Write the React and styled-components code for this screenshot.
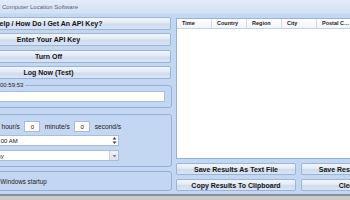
import React from "react";
import styled, { createGlobalStyle } from "styled-components";

const GlobalStyle = createGlobalStyle`
  html, body {
    margin: 0;
    padding: 0;
    overflow: hidden;
    background: #c9c9c9;
  }
  body {
    font-family: "Liberation Sans", Arial, sans-serif;
  }
`;

const Screen = styled.div`
  width: 350px;
  height: 200px;
  overflow: hidden;
  background: #cbcbcb;
`;

const Window = styled.div`
  width: 501px;
  height: 194px;
  margin-left: -76px;
  display: flex;
  flex-direction: column;
  background: #c4d7f2;
  border-bottom: 2px solid #8d9096;
`;

const TitleBar = styled.div`
  height: 14px;
  flex: none;
  box-sizing: border-box;
  display: flex;
  align-items: center;
  padding-left: 78px;
  font-size: 6px;
  color: #59637a;
  background: linear-gradient(#e3ecf8, #d3e1f4);
  border-bottom: 1px solid #ccdcf2;
`;

const Body = styled.div`
  flex: 1;
  display: flex;
  gap: 4px;
  padding: 3px 0 0 2px;
`;

const LeftPanel = styled.div`
  width: 246px;
  display: flex;
  flex-direction: column;
`;

const RightPanel = styled.div`
  width: 245px;
  display: flex;
  flex-direction: column;
`;

const ButtonStack = styled.div`
  display: flex;
  flex-direction: column;
  gap: 3.4px;
`;

const PushButton = styled.button`
  display: block;
  width: ${(p) => p.$w || "100%"};
  height: ${(p) => p.$h || 13}px;
  padding: 0;
  box-sizing: border-box;
  border: 1px solid #9db3d3;
  border-radius: 2px;
  background: linear-gradient(#f2f6fc, #e2eaf7 45%, #cfdcf0 55%, #d9e5f5);
  font: bold 7px "Liberation Sans", Arial, sans-serif;
  color: #141414;
  white-space: nowrap;
  overflow: hidden;
`;

const Group = styled.fieldset`
  margin: ${(p) => p.$mt || 0}px 0 0;
  padding: ${(p) => p.$pad};
  min-width: 0;
  box-sizing: border-box;
  border: 1px solid #95b1da;
  border-radius: 3px;
`;

const Caption = styled.legend`
  margin-left: 65px;
  padding: 0 2px;
  font-size: 6px;
  line-height: 8px;
  color: #1c1c1c;
`;

const TextField = styled.input`
  display: block;
  width: 100%;
  height: 11px;
  box-sizing: border-box;
  margin: 0;
  padding: 0 2px;
  border: 1px solid #a7bddb;
  background: #fff;
  font: 6px "Liberation Sans", Arial, sans-serif;
`;

const Row = styled.div`
  display: flex;
  align-items: center;
  gap: 3.5px;
  height: 11px;
  font-size: 6.6px;
  color: #1a1a1a;
`;

const Lead = styled.div`
  width: 65px;
  display: flex;
  justify-content: flex-end;
  align-items: center;
  gap: 3px;
`;

const NumBox = styled.input`
  width: 16px;
  height: 11px;
  box-sizing: border-box;
  margin: 0 1px;
  padding: 0;
  border: 1px solid #a7bddb;
  background: #fff;
  text-align: center;
  font: 6px "Liberation Sans", Arial, sans-serif;
  color: #111;
`;

const Picker = styled.div`
  width: 186px;
  height: 11px;
  margin-top: ${(p) => p.$mt}px;
  box-sizing: border-box;
  display: flex;
  align-items: center;
  border: 1px solid #a7bddb;
  background: #fff;
  font-size: 6px;
  color: #111;
`;

const PickerText = styled.span`
  flex: 1;
  padding-left: ${(p) => p.$pad}px;
  white-space: nowrap;
`;

const Spin = styled.div`
  width: 8px;
  height: 100%;
  display: flex;
  align-items: center;
  justify-content: center;
`;

const DropButton = styled.div`
  width: 8px;
  height: 100%;
  display: flex;
  align-items: center;
  justify-content: center;
  background: linear-gradient(#f1f3f6, #dde3ea);
  border-left: 1px solid #c8d3e2;
`;

const CheckRow = styled.label`
  display: flex;
  align-items: center;
  gap: 4px;
  height: 10px;
  margin-left: 34px;
  font-size: 6.3px;
  color: #1a1a1a;
`;

const CheckBox = styled.span`
  width: 9px;
  height: 9px;
  box-sizing: border-box;
  border: 1px solid #8ea6c8;
  background: #fff;
`;

const ListView = styled.div`
  height: 141px;
  margin-top: 1px;
  box-sizing: border-box;
  border: 1px solid #94b2dd;
  background: #fff;
  overflow: hidden;
`;

const Header = styled.div`
  display: flex;
  height: 10px;
  box-sizing: border-box;
  background: linear-gradient(#ffffff, #f1f4f9);
  border-bottom: 1px solid #c3d3ea;
`;

const HeaderCell = styled.div`
  width: 35px;
  flex: none;
  box-sizing: border-box;
  padding: 0 0 0 5px;
  border-right: 1px solid #d4dbe6;
  font-size: 5.5px;
  font-weight: bold;
  line-height: 9px;
  color: #222;
  white-space: nowrap;
  overflow: hidden;
  text-overflow: ellipsis;
`;

const ButtonGrid = styled.div`
  margin-top: 4px;
  display: grid;
  grid-template-columns: 120px 120px;
  column-gap: 5px;
  row-gap: 4px;
`;

const columns = ["Time", "Country", "Region", "City", "Postal Code", "Latitude", "Longitude"];

function App() {
  return (
    <Screen>
      <GlobalStyle />
      <Window>
        <TitleBar>Computer Location Software</TitleBar>
        <Body>
          <LeftPanel>
            <ButtonStack>
              <PushButton $w="245px">Help / How Do I Get An API Key?</PushButton>
              <PushButton $w="245px">Enter Your API Key</PushButton>
              <PushButton $w="245px">Turn Off</PushButton>
              <PushButton $w="245px">Log Now (Test)</PushButton>
            </ButtonStack>

            <Group $mt={2} $pad="2px 6px 5px">
              <Caption>00:59:53</Caption>
              <TextField readOnly value="" />
            </Group>

            <Group $mt={6} $pad="6px 6px 5px">
              <Row>
                <Lead>
                  Log every
                  <NumBox readOnly value="1" />
                </Lead>
                <span>hour/s</span>
                <NumBox readOnly value="0" />
                <span>minute/s</span>
                <NumBox readOnly value="0" />
                <span>second/s</span>
              </Row>
              <Picker $mt={3}>
                <PickerText $pad={50}>12:00:00 AM</PickerText>
                <Spin>
                  <svg width="5" height="9" viewBox="0 0 5 9">
                    <path d="M2.5 1 L4.5 3.5 H0.5 Z" fill="#3c4552" />
                    <path d="M2.5 8 L4.5 5.5 H0.5 Z" fill="#3c4552" />
                  </svg>
                </Spin>
              </Picker>
              <Picker $mt={4}>
                <PickerText $pad={42}>Every Day</PickerText>
                <DropButton>
                  <svg width="5" height="4" viewBox="0 0 5 4">
                    <path d="M0.5 1 H4.5 L2.5 3.5 Z" fill="#7b8594" />
                  </svg>
                </DropButton>
              </Picker>
            </Group>

            <Group $mt={4} $pad="4px 6px 4px">
              <CheckRow>
                <CheckBox />
                Run at Windows startup
              </CheckRow>
            </Group>
          </LeftPanel>

          <RightPanel>
            <ListView>
              <Header>
                {columns.map((c) => (
                  <HeaderCell key={c}>{c}</HeaderCell>
                ))}
              </Header>
            </ListView>
            <ButtonGrid>
              <PushButton $h={12}>Save Results As Text File</PushButton>
              <PushButton $h={12}>Save Results As CSV File</PushButton>
              <PushButton $h={12}>Copy Results To Clipboard</PushButton>
              <PushButton $h={12}>Clear Results</PushButton>
            </ButtonGrid>
          </RightPanel>
        </Body>
      </Window>
    </Screen>
  );
}

export default App;
